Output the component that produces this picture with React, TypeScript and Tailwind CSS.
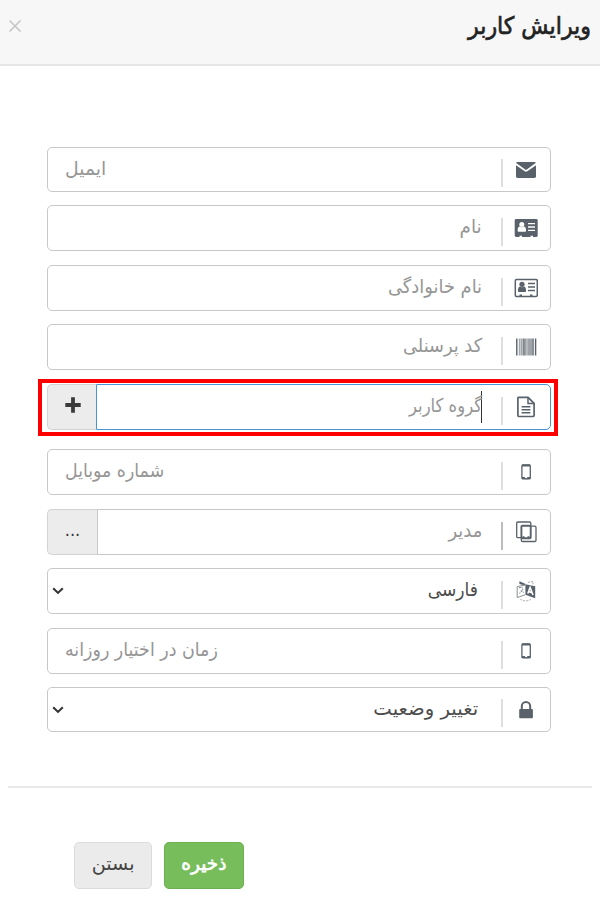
import type { ReactNode } from "react";

type FieldProps = {
  text: string;
  icon: ReactNode;
  className?: string;
  // email and number inputs keep their placeholder on the left
  ltr?: boolean;
  select?: boolean;
  active?: boolean;
  addon?: ReactNode;
  divider?: string;
  scale?: string;
};

function Icon({ children }: { children: ReactNode }) {
  return (
    <svg width="24" height="24" viewBox="0 0 24 24" fill="none" className="shrink-0 text-[#59626a]">
      {children}
    </svg>
  );
}

const EnvelopeIcon = () => (
  <Icon>
    <path fill="currentColor" d="M3.5 4h17c.7 0 1.2.5 1.2 1L12.8 11.6q-.8.6-1.6 0L2.2 5c0-.5.5-1 1.3-1Z" />
    <path fill="currentColor" d="M2 7.2l8.7 6.1q1.3.9 2.6 0L22 7.2v11.1c0 .9-.7 1.6-1.6 1.6H3.6c-.9 0-1.6-.7-1.6-1.6Z" />
  </Icon>
);

const CardIcon = () => (
  <Icon>
    <rect x=".7" y="3" width="23" height="18" rx="1.4" fill="currentColor" />
    <circle cx="7.8" cy="8.6" r="2.5" fill="#fff" />
    <path fill="#fff" d="M3.6 14.8c0-2.7.9-4.2 2.3-4.2q1.9 1.3 3.8 0c1.5 0 2.4 1.5 2.4 4.2q0 1-1 1H4.6q-1 0-1-1Z" />
    <path stroke="#fff" strokeWidth="1.4" d="M14 7.6h7M14 11h7M14 14.4h7" />
    <path stroke="#fff" strokeWidth="1.2" d="M5.5 20.4h2.5M16.5 20.4h2.5" />
  </Icon>
);

const CardOutlineIcon = () => (
  <Icon>
    <rect x="1.3" y="3.6" width="22" height="16.8" rx="1.2" stroke="currentColor" strokeWidth="1.5" />
    <circle cx="8" cy="8.3" r="2.6" fill="currentColor" />
    <path fill="currentColor" d="M3.9 15c0-2.7.8-4.5 2.2-4.5q1.9 1.3 3.8 0c1.4 0 2.2 1.8 2.2 4.5q0 1-1 1H4.9q-1 0-1-1Z" />
    <path stroke="currentColor" strokeWidth="1.4" d="M14 7.5h7M14 11h7M14 14.5h7M5.5 19.2h2.5M16 19.2h2.5" />
  </Icon>
);

const BarcodeIcon = () => (
  <Icon>
    <path stroke="currentColor" strokeWidth="1.4" d="M2.8 3.5v17M19 3.5v17M21.6 3.5v17" />
    <path stroke="#a3a8ac" strokeWidth="1.6" d="M5.6 3.5v17M7.6 3.5v17M13 3.5v17" />
    <path stroke="#80868b" strokeWidth="1.5" d="M9.4 3.5v17M11 3.5v17M15 3.5v17M17 3.5v17" />
  </Icon>
);

const FileIcon = () => (
  <Icon>
    <path stroke="currentColor" strokeWidth="1.7" strokeLinejoin="round" d="M4.6 2.3h9.5l6 6v12.3q0 .9-.9.9H4.8q-.9 0-.9-.9V3.2q0-.9.7-.9Z" />
    <path stroke="currentColor" strokeWidth="1.5" d="M14 2.5v6.1h6.1M7.6 11.7h8.8M7.6 14.8h8.8M7.6 17.8h8.8" />
  </Icon>
);

const MobileIcon = () => (
  <Icon>
    <rect x="7.9" y="4.9" width="8.4" height="14" rx="1" stroke="currentColor" strokeWidth="1.3" />
    <path stroke="currentColor" strokeWidth="2" d="M8 5.4h8.2M8 18.1h3M13.2 18.1h3" />
    <path stroke="currentColor" strokeWidth="1" d="M10.5 18.7h3" />
  </Icon>
);

const DevicesIcon = () => (
  <Icon>
    <path stroke="currentColor" strokeWidth="1.3" d="M7 17.6H3.9q-1.2 0-1.2-1.2V3.2Q2.7 2 3.9 2h11.7q1.2 0 1.2 1.2v2.2" />
    <path stroke="currentColor" strokeWidth="1.3" d="M16.8 6.2h3.9q1.3 0 1.3 1.3v12.7q0 1.3-1.3 1.3H8.6q-1.3 0-1.3-1.3v-2.4" />
    <rect x="7.4" y="5.7" width="9.3" height="12.6" rx="1" stroke="currentColor" strokeWidth="1.9" />
    <path stroke="currentColor" strokeWidth="1.8" d="M8.5 17.1h2M13.5 17.1h2" />
  </Icon>
);

const LanguageIcon = () => (
  <Icon>
    <path fill="currentColor" d="m11.4 5.2 9.8 2v12l-9.8-3.4Z" />
    <path fill="currentColor" d="m5.4 2.3 5.8 2.5v1.8L5.4 4.9Z" />
    <path stroke="#8b9196" strokeWidth="1" d="m10.8 6.1-7.6 1.5v11l7.8-2.8" />
    <path stroke="currentColor" strokeWidth=".9" strokeDasharray="1.5 1" d="M5 8.8q4-.9 4 1t-3.8 4.6M7 11.4q1 2 2.7 2" />
    <path stroke="#fff" strokeWidth="1.6" d="m13.8 14.5 2.3-6 2.9 7.5M14.8 12.7l3 .7" />
    <path stroke="#9da2a6" strokeWidth=".9" strokeDasharray="2 1" d="M6.3 20.1q5.5 3.7 11-.1M14 3.4l5-1v3" />
  </Icon>
);

const LockIcon = () => (
  <Icon>
    <path stroke="currentColor" strokeWidth="2" d="M7.8 11.5V8.2a4.2 4.2 0 0 1 8.4 0v3.3" />
    <rect x="5.2" y="11" width="13.7" height="9.2" rx="1" fill="currentColor" />
  </Icon>
);

function Field({ text, icon, className = "h-[46px]", ltr, select, active, addon, divider = "bg-[#dedede]", scale }: FieldProps) {
  return (
    <div dir="ltr" className={`flex w-[504px] ${className}`}>
      {addon && (
        <div
          className={`flex shrink-0 items-center justify-center rounded-l-[5px] border border-r-0 border-[#d3d3d3] bg-[#ececec] pb-[5px] text-[#333] ${
            active ? "w-[49px]" : "w-[50px]"
          }`}
        >
          {addon}
        </div>
      )}
      <div
        className={`flex min-w-0 flex-1 items-center border bg-white pr-[12px] ${addon ? "rounded-r-[5px]" : "rounded-[5px]"} ${
          active ? "border-[#4a95d6]" : "border-[#c8c8c8]"
        }`}
      >
        {select && (
          <svg width="12" height="8" viewBox="0 0 12 8" fill="none" className="ml-[4px] shrink-0">
            <path d="m1.2 1.3 4.8 4.6 4.8-4.6" stroke="#333" strokeWidth="2.1" />
          </svg>
        )}
        <div
          className={`flex flex-1 pb-[4px] text-[19px] leading-[28px] whitespace-nowrap ${
            ltr ? "justify-start pl-[17px]" : select ? "justify-end pr-[23px]" : "justify-end pr-[19px]"
          } ${select ? "text-[#4c4c4c]" : "text-[#969696]"}`}
        >
          <span dir="rtl" className={`${ltr ? "origin-left" : "origin-right"} ${scale ?? ""}`}>
            {text}
          </span>
        </div>
        {active && <div className="-ml-[20px] mr-[19px] h-[32px] w-px bg-[#333]" />}
        <div className={`mt-[7px] mr-[11px] h-[28px] w-[2px] ${divider}`} />
        {icon}
      </div>
    </div>
  );
}

export default function App() {
  return (
    <div dir="rtl" className="h-[900px] w-[600px] overflow-hidden bg-white font-['DejaVu_Sans_Condensed','DejaVu_Sans',sans-serif]">
      {/* header */}
      <header className="flex h-[66px] items-center justify-between border-b-2 border-[#e6e6e6] bg-[#f7f7f7] pr-[9px] pl-[9px] pb-[12px]">
        <h1 className="origin-right scale-x-[1.025] text-[24px] leading-[32px] font-medium text-[#222] [-webkit-text-stroke:0.6px_#222]">
          ویرایش کاربر
        </h1>
        <svg width="12" height="12" viewBox="0 0 12 12" fill="none">
          <path d="m.5.5 11 11m0-11-11 11" stroke="#c3c3c3" strokeWidth="1.5" />
        </svg>
      </header>

      {/* form fields */}
      <main className="flex flex-col items-end pt-[81px] pl-[47px]">
        <Field className="h-[45px]" text="ایمیل" icon={<EnvelopeIcon />} ltr scale="scale-x-[1.1]" />
        <Field className="mt-[13px] h-[46px]" text="نام" icon={<CardIcon />} scale="scale-x-[1.07]" />
        <Field className="mt-[14px] h-[46px]" text="نام خانوادگی" icon={<CardOutlineIcon />} scale="scale-x-[1.045]" />
        <Field className="mt-[13px] h-[46px]" text="کد پرسنلی" icon={<BarcodeIcon />} scale="scale-x-[1.04]" />
        {/* highlighted row */}
        <div className="mt-[9px] -ml-[9px] border-4 border-[#f00] pt-px pr-[3px] pb-[2px] pl-[5px]">
          <Field
            text="گروه کاربر"
            icon={<FileIcon />}
            active
            scale="scale-x-[0.96]"
            addon={
              <svg width="16" height="16" viewBox="0 0 16 16" className="ml-px">
                <path d="M8 .3v15.4M.3 8h15.4" stroke="#3b3b3b" strokeWidth="3.8" />
              </svg>
            }
          />
        </div>
        <Field className="mt-[13px] h-[46px]" text="شماره موبایل" icon={<MobileIcon />} ltr scale="scale-x-[1.015]" />
        <Field
          className="mt-[14px] h-[46px]"
          text="مدیر"
          icon={<DevicesIcon />}
          divider="bg-[#bcbcbc]"
          scale="scale-x-[1.05]"
          addon={<span className="text-[18px]">...</span>}
        />
        <Field className="mt-[13px] h-[46px]" text="فارسی" icon={<LanguageIcon />} select />
        <Field className="mt-[14px] h-[46px]" text="زمان در اختیار روزانه" icon={<MobileIcon />} ltr scale="scale-x-[1.02]" />
        <Field className="mt-[13px] h-[45px]" text="تغییر وضعیت" icon={<LockIcon />} select scale="scale-x-[1.15]" />
      </main>

      {/* footer */}
      <footer className="mx-[8px] mt-[54px] flex justify-end gap-[12px] border-t-2 border-[#e9e9e9] pt-[54px] pl-[66px]">
        <button className="h-[47px] w-[80px] rounded-[5px] border border-[#6cb052] bg-[#77bd5c] pb-[4px] text-[19px] text-white [-webkit-text-stroke:0.6px_#fff]">
          <span className="inline-block scale-x-[1.08]">ذخیره</span>
        </button>
        <button className="h-[47px] w-[78px] rounded-[5px] border border-[#dcdcdc] bg-[#ebebeb] pb-[4px] text-[19px] text-[#444]">
          <span className="inline-block scale-x-[1.12]">بستن</span>
        </button>
      </footer>
    </div>
  );
}
